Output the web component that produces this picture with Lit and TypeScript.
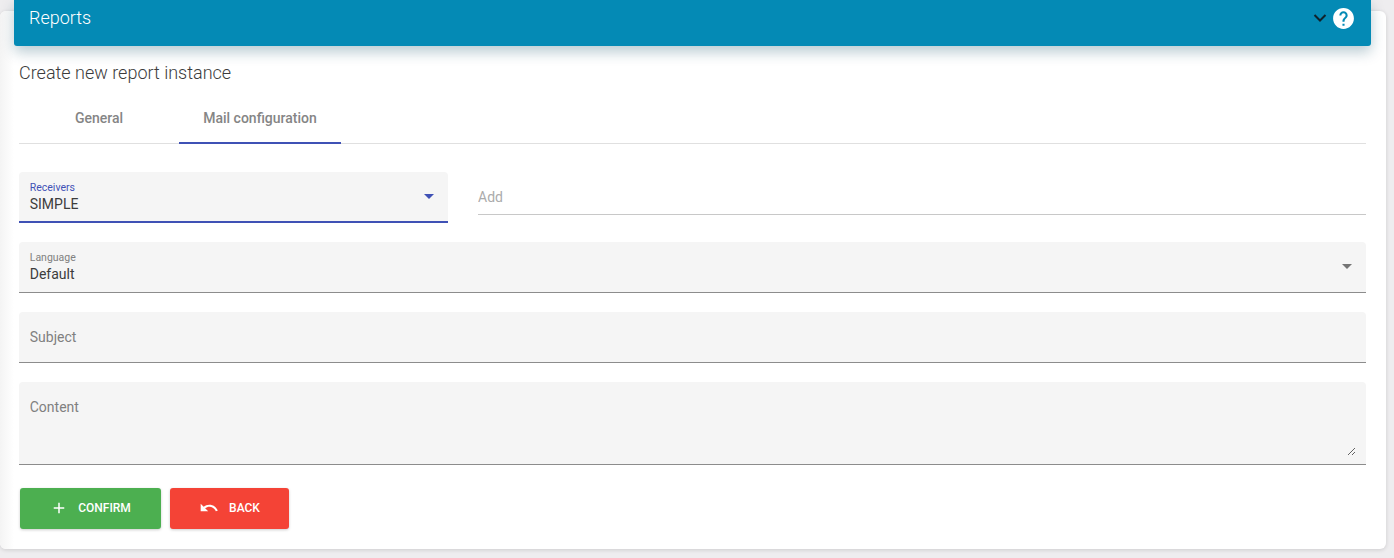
import { LitElement, html, css } from "lit";
import { customElement } from "lit/decorators.js";

@customElement("app-root")
export class AppRoot extends LitElement {
  static styles = css`
    :host { display: block; height: 558px; box-sizing: border-box; padding: 11px 8px 9px 0; background: #eeedef; font-family: Roboto, sans-serif; overflow: hidden; }
    .card { height: 538px; box-sizing: border-box; background: #fff; border-radius: 6px; box-shadow: 0 1px 4px rgba(0,0,0,.14); padding: 0 20px 0 19px; display: flow-root; position: relative; }
    .card::before { content: ""; position: absolute; left: 0; top: 0; bottom: 0; width: 14px; background: linear-gradient(90deg, #f4f4f4, #fff); border-radius: 6px 0 0 6px; pointer-events: none; }
    .head { position: relative; margin: -11px -5px 0 -5px; height: 46px; box-sizing: border-box; padding: 0 15px 10px 15px; background: #048ab5; border-radius: 0 0 3px 3px; box-shadow: 0 6px 14px rgba(0,70,95,.28); display: flex; align-items: center; justify-content: space-between; color: #fff; }
    .head-title { font-size: 18px; font-weight: 300; line-height: 36px; }
    .head-icons { display: flex; align-items: center; gap: 3px; }
    .head-icons svg { display: block; }
    .title { position: relative; margin-top: 16px; font-size: 18px; font-weight: 300; line-height: 22px; color: #3c3c3c; }
    .tabs { position: relative; display: flex; height: 49px; margin-top: 10px; border-bottom: 1px solid #e0e0e0; font-size: 14px; font-weight: 500; color: #858585; }
    .tab { width: 160px; display: flex; align-items: center; justify-content: center; box-sizing: border-box; padding-bottom: 1px; }
    .tab.on { width: 162px; border-bottom: 2px solid #3f51b5; margin-bottom: -1px; padding-bottom: 1px; }
    .row { position: relative; display: flex; gap: 30px; margin-top: 28px; align-items: flex-start; }
    .field { position: relative; display: flex; flex-direction: column; box-sizing: border-box; background: #f5f5f5; border-radius: 4px 4px 0 0; border-bottom: 1px solid #8c8c8c; padding: 0 10px 0 10.75px; margin-top: 19px; }
    .row .field { margin-top: 0; }
    .select { height: 51px; justify-content: flex-start; padding-top: 10px; }
    .select.active { width: 429px; flex: none; height: 51px; border-bottom: 2px solid #3f51b5; }
    .label { font-size: 10.5px; line-height: 12px; color: #808080; }
    .active .label { color: #3f51b5; }
    .value { font-size: 14px; line-height: 18px; color: #3c3c3c; margin-top: 1px; }
    .arrow { position: absolute; right: 14px; top: 22px; width: 0; height: 0; border-left: 5px solid transparent; border-right: 5px solid transparent; border-top: 5px solid #757575; }
    .active .arrow { border-top-color: #3f51b5; }
    .add { flex: 1; height: 43px; margin: 0; box-sizing: border-box; border: 0; border-bottom: 1px solid #c8c8c8; outline: 0; background: transparent; font: 14px Roboto, sans-serif; padding: 8px 0 0; color: #333; }
    .add::placeholder { color: #ababab; }
    .subject { height: 51px; justify-content: center; }
    input.plain, textarea { border: 0; outline: 0; background: transparent; font: 14px/18px Roboto, sans-serif; color: #333; padding: 0; width: 100%; display: block; }
    input.plain::placeholder, textarea::placeholder { color: #808080; opacity: 1; }
    .content { height: 83px; padding-top: 16px; }
    textarea { height: 58px; resize: vertical; }
    .actions { position: relative; display: flex; gap: 9px; margin: 23px 0 0 1px; }
    button { height: 41px; border: 0; border-radius: 3px; display: flex; align-items: center; justify-content: center; gap: 10px; color: #fff; font: 500 12px Roboto, sans-serif; text-transform: uppercase; padding: 0 0 2px; box-shadow: 0 1px 3px rgba(0,0,0,.2); }
    .ok { width: 141px; background: #4caf50; }
    .back { width: 119px; background: #f44336; }
    button svg { display: block; }
  `;

  render() {
    return html`
      <div class="card">
        <div class="head">
          <div class="head-title">Reports</div>
          <div class="head-icons">
            <svg width="16" height="16" viewBox="0 0 16 16"><path d="M2.500 5l5.500 5.500L13.500 5" fill="none" stroke="#10222b" stroke-width="2"/></svg>
            <svg width="25" height="25" viewBox="0 0 24 24"><path fill="#fff" d="M12 2C6.480 2 2 6.480 2 12s4.480 10 10 10 10-4.480 10-10S17.520 2 12 2zm1 17h-2v-2h2v2zm2.070-7.750l-.9.920C13.450 12.900 13 13.500 13 15h-2v-.5c0-1.100.45-2.100 1.170-2.830l1.240-1.260c.37-.36.59-.86.59-1.410 0-1.100-.9-2-2-2s-2 .9-2 2H8c0-2.210 1.790-4 4-4s4 1.790 4 4c0 .88-.36 1.680-.93 2.250z"/></svg>
          </div>
        </div>
        <div class="title">Create new report instance</div>
        <div class="tabs">
          <div class="tab">General</div>
          <div class="tab on">Mail configuration</div>
        </div>
        <div class="row">
          <div class="field select active">
            <span class="label">Receivers</span>
            <span class="value">SIMPLE</span>
            <span class="arrow"></span>
          </div>
          <input class="add" placeholder="Add" />
        </div>
        <div class="field select">
          <span class="label">Language</span>
          <span class="value">Default</span>
          <span class="arrow"></span>
        </div>
        <div class="field subject"><input class="plain" placeholder="Subject" /></div>
        <div class="field content"><textarea placeholder="Content"></textarea></div>
        <div class="actions">
          <button class="ok">
            <svg width="18" height="18" viewBox="0 0 24 24"><path fill="#fff" d="M19 13h-6v6h-2v-6H5v-2h6V5h2v6h6v2z"/></svg>
            Confirm
          </button>
          <button class="back">
            <svg width="20" height="20" viewBox="0 0 24 24"><path fill="#fff" d="M12.500 8c-2.650 0-5.050.99-6.900 2.600L2 7v9h9l-3.620-3.620c1.390-1.160 3.160-1.880 5.120-1.880 3.540 0 6.550 2.310 7.600 5.500l2.370-.78C21.080 11.030 17.150 8 12.500 8z"/></svg>
            Back
          </button>
        </div>
      </div>
    `;
  }
}
